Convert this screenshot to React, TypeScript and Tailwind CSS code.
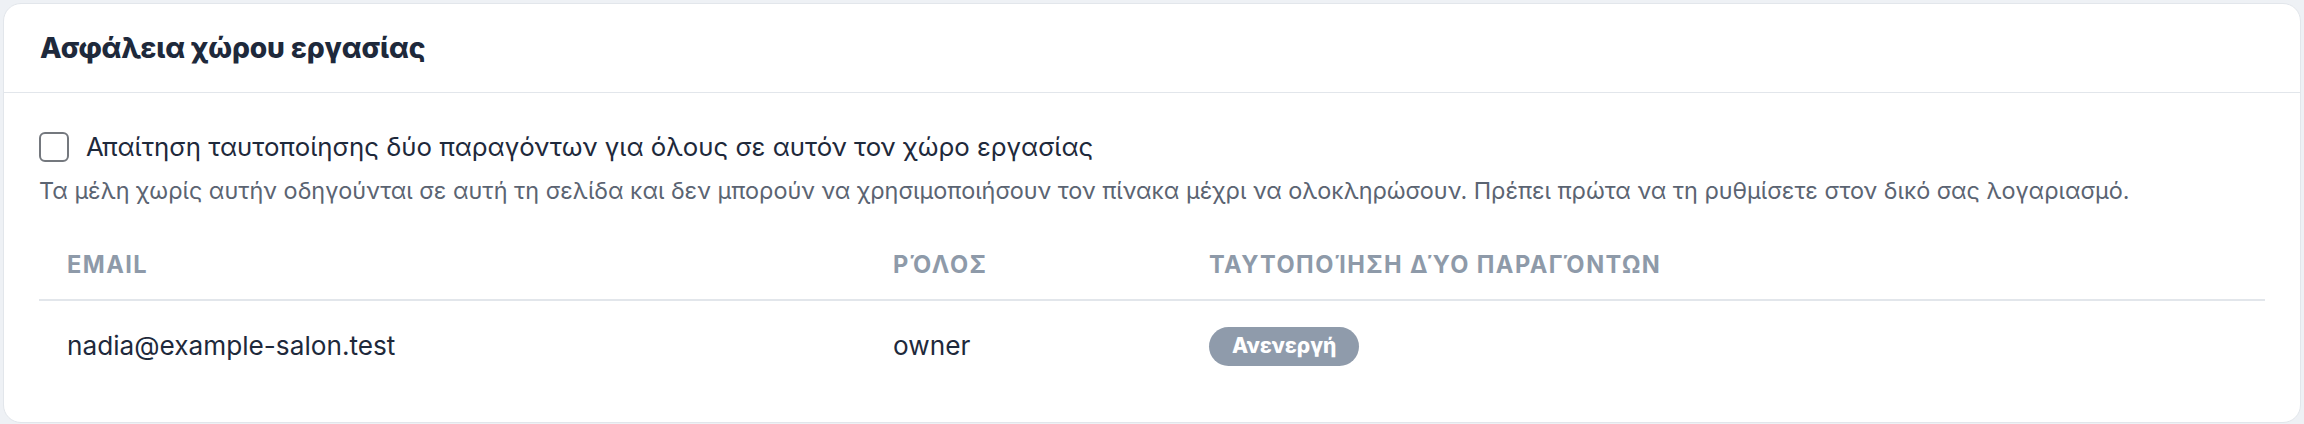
export default function App() {
  return (
    <div className="min-h-[424px] bg-[#eef1f5] p-[3px] font-['Inter',sans-serif]">
      <section className="rounded-[18px] border border-[#e2e6eb] bg-white">
        {/* Header */}
        <header className="border-b border-[#e2e6eb] px-[36px] py-[26px]">
          <h2 className="text-[28.2px] font-extrabold leading-[36px] tracking-[-0.005em] text-[#1e293b]">
            Ασφάλεια χώρου εργασίας
          </h2>
        </header>

        <div className="px-[35px] pt-[36px] pb-[31px]">
          <label className="flex items-center gap-[17px]">
            <input
              type="checkbox"
              className="h-[30px] w-[30px] appearance-none rounded-[6px] border-2 border-[#74787e] bg-white"
            />
            <span className="text-[25.8px] leading-[36px] text-[#1e293b]">
              Απαίτηση ταυτοποίησης δύο παραγόντων για όλους σε αυτόν τον χώρο εργασίας
            </span>
          </label>
          <p className="mt-[10px] text-[23.4px] leading-[32px] text-[#5b6472]">
            Τα μέλη χωρίς αυτήν οδηγούνται σε αυτή τη σελίδα και δεν μπορούν να χρησιμοποιήσουν τον πίνακα μέχρι να ολοκληρώσουν. Πρέπει πρώτα να τη ρυθμίσετε στον δικό σας λογαριασμό.
          </p>

          {/* Members table */}
          <div className="mt-[24px]">
            <div className="grid grid-cols-[826px_316px_1fr] border-b-2 border-[#e2e6eb] text-[23.6px] font-bold uppercase leading-[30px] tracking-[0.06em] text-[#8e9aa9]">
              <div className="px-[28px] pt-[19px] pb-[19px]">Email</div>
              <div className="px-[28px] pt-[19px] pb-[19px]">Ρόλος</div>
              <div className="px-[28px] pt-[19px] pb-[19px]">Ταυτοποίηση δύο παραγόντων</div>
            </div>
            <div className="grid grid-cols-[826px_316px_1fr] items-center text-[26.2px] leading-[36px] text-[#1e293b]">
              <div className="px-[28px] py-[25px]">nadia@example-salon.test</div>
              <div className="px-[28px] py-[25px]">owner</div>
              <div className="px-[28px] py-[25px]">
                <span className="inline-flex h-[39px] items-center rounded-full bg-[#8f9bab] px-[23px] text-[21px] font-extrabold text-white">
                  Ανενεργή
                </span>
              </div>
            </div>
          </div>
        </div>
      </section>
    </div>
  );
}
